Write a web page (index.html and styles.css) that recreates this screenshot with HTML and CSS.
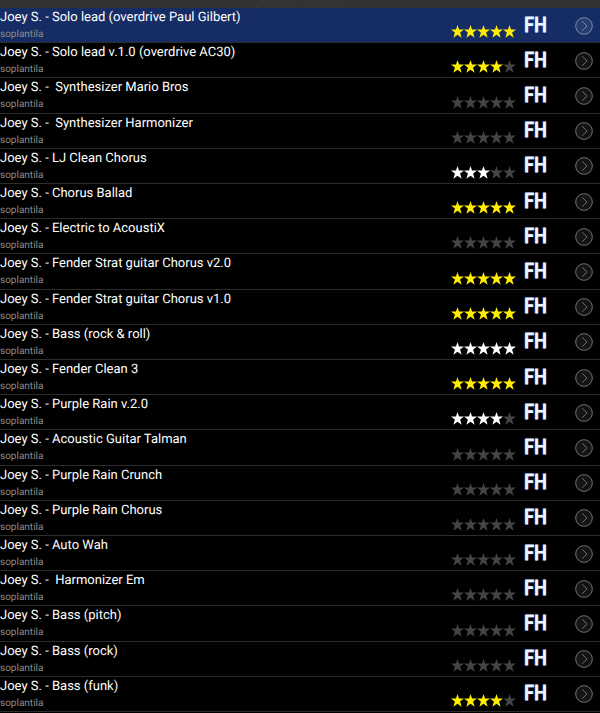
FILE: index.html
```html
<!DOCTYPE html>
<html lang="en">
<head>
    <meta charset="UTF-8">
    <meta name="viewport" content="width=device-width, initial-scale=1.0">
    <title>Search results</title>
    <link rel="stylesheet" href="styles.css">
</head>
<body>
    <svg class="symbols" aria-hidden="true">
        <symbol id="star" viewBox="0 0 12 12">
            <path d="M6 0 L7.4 4.2 H12 L8.4 7 L9.8 11.8 L6 9 L2.2 11.8 L3.6 7 L0 4.2 H4.6 Z"/>
        </symbol>
        <symbol id="open" viewBox="0 0 18 18">
            <circle cx="9" cy="9" r="8.3"/>
            <path d="M7 4.2 L12 9 L7 13.8"/>
        </symbol>
    </svg>

    <header class="top-bar"><span class="top-title">Search results</span></header>
    <ul class="preset-list" id="preset-list"></ul>

    <script>
        const presets = [
            { name: 'Joey S. - Solo lead (overdrive Paul Gilbert)', stars: 5, color: 'yellow', selected: true },
            { name: 'Joey S. - Solo lead v.1.0 (overdrive AC30)', stars: 4, color: 'yellow' },
            { name: 'Joey S. -  Synthesizer Mario Bros', stars: 0 },
            { name: 'Joey S. -  Synthesizer Harmonizer', stars: 0 },
            { name: 'Joey S. - LJ Clean Chorus', stars: 3, color: 'white' },
            { name: 'Joey S. - Chorus Ballad', stars: 5, color: 'yellow' },
            { name: 'Joey S. - Electric to AcoustiX', stars: 0 },
            { name: 'Joey S. - Fender Strat guitar Chorus v2.0', stars: 5, color: 'yellow' },
            { name: 'Joey S. - Fender Strat guitar Chorus v1.0', stars: 5, color: 'yellow' },
            { name: 'Joey S. - Bass (rock & roll)', stars: 5, color: 'white' },
            { name: 'Joey S. - Fender Clean 3', stars: 5, color: 'yellow' },
            { name: 'Joey S. - Purple Rain v.2.0', stars: 4, color: 'white' },
            { name: 'Joey S. - Acoustic Guitar Talman', stars: 0 },
            { name: 'Joey S. - Purple Rain Crunch', stars: 0 },
            { name: 'Joey S. - Purple Rain Chorus', stars: 0 },
            { name: 'Joey S. - Auto Wah', stars: 0 },
            { name: 'Joey S. -  Harmonizer Em', stars: 0 },
            { name: 'Joey S. - Bass (pitch)', stars: 0 },
            { name: 'Joey S. - Bass (rock)', stars: 0 },
            { name: 'Joey S. - Bass (funk)', stars: 4, color: 'yellow' }
        ];

        const list = document.getElementById('preset-list');

        presets.forEach(preset => {
            const row = document.createElement('li');
            row.className = preset.selected ? 'preset selected' : 'preset';

            let stars = '';
            for (let i = 0; i < 5; i++) {
                const color = i < preset.stars ? preset.color : 'empty';
                stars += `<svg class="star ${color}"><use href="#star"/></svg>`;
            }

            row.innerHTML = `
                <div class="info">
                    <span class="name"></span>
                    <span class="author">soplantila</span>
                </div>
                <div class="stars">${stars}</div>
                <span class="brand">FH</span>
                <button class="open" type="button"><svg class="open-icon"><use href="#open"/></svg></button>`;
            row.querySelector('.name').textContent = preset.name;
            row.querySelector('.open').setAttribute('aria-label', 'Open ' + preset.name);
            list.appendChild(row);
        });
    </script>
</body>
</html>
```

FILE: styles.css
```css
* {
    box-sizing: border-box;
}

body {
    display: flex;
    flex-direction: column;
    min-height: 100vh;
    margin: 0;
    padding-bottom: 1px;
    background-color: #000;
    color: #fff;
    font-family: Roboto, sans-serif;
    text-rendering: geometricPrecision;
}

.symbols {
    display: none;
}

.top-bar {
    display: flex;
    justify-content: center;
    align-items: flex-end;
    height: 8px;
    padding-bottom: 3px;
    overflow: hidden;
    background-color: #333;
}

.top-title {
    color: #777;
    font-size: 13px;
    line-height: 16px;
}

.preset-list {
    display: grid;
    grid-auto-rows: 1fr;
    flex: 1;
    margin: 0;
    padding: 0;
    list-style: none;
}

.preset {
    display: flex;
    align-items: center;
    padding: 1px 7px 0 0;
    border-bottom: 1px solid #2c2c2c;
}

.selected {
    background-color: #152c64;
}

.info {
    display: flex;
    flex-direction: column;
    flex: 1;
}

.name {
    font-size: 13px;
    line-height: 18px;
    white-space: pre;
}

.author {
    font-size: 10px;
    line-height: 15px;
    color: #8c8c8c;
}

.stars {
    display: flex;
    align-self: flex-end;
    padding-bottom: 4px;
}

.star {
    width: 13px;
    height: 13px;
}

.yellow {
    fill: #ffee00;
}

.white {
    fill: #fff;
}

.empty {
    fill: #444;
}

.brand {
    width: 24px;
    margin-left: 8px;
    color: #fff;
    font-family: "Liberation Sans Narrow", "Roboto Condensed", "Liberation Sans", sans-serif;
    font-size: 21px;
    line-height: 24px;
    -webkit-text-stroke: 1px #e6f2ff;
    text-shadow: 0 0 1px #3f7be0, 0 0 2px #3f7be0;
}

.open {
    width: 18px;
    height: 18px;
    margin-left: 27px;
    padding: 0;
    border: none;
    border-radius: 50%;
    background-color: rgba(255, 255, 255, 0.08);
    cursor: pointer;
}

.open-icon {
    display: block;
    width: 18px;
    height: 18px;
    fill: none;
    stroke: rgba(255, 255, 255, 0.38);
    stroke-width: 1;
}
```
